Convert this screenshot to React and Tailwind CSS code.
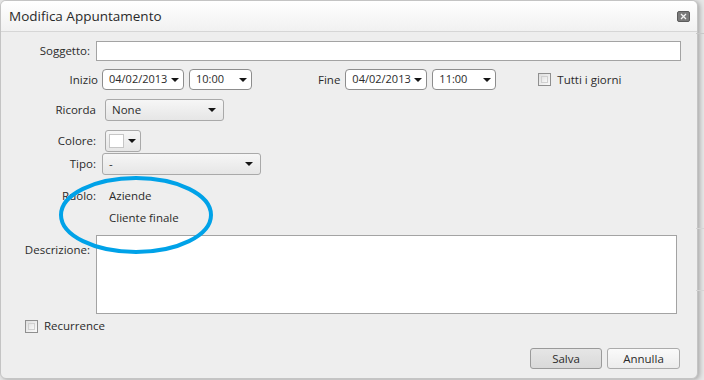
import React from 'react';

const font = { fontFamily: '"Open Sans", "Liberation Sans", sans-serif' };

const Caret = () => (
    <svg width="8" height="4" viewBox="0 0 8 4" className="shrink-0">
        <path d="M0 0h8L4 4z" fill="#151515" />
    </svg>
);

// white dropdown with rounded corners (date / time pickers)
const Picker = ({ value, className }) => (
    <div className={`flex h-[21px] items-center justify-between rounded-[4px] border border-[#8d8d8d] bg-white pl-[6px] pr-[4px] text-[11px] ${className}`}>
        <span>{value}</span>
        <Caret />
    </div>
);

// grey combo box (Ricorda / Tipo)
const Combo = ({ value, className }) => (
    <div className={`flex h-[22px] items-center justify-between rounded-[3px] border border-[#a9a9a9] bg-gradient-to-b from-[#f6f6f6] to-[#e6e6e6] pl-[6px] pr-[7px] ${className}`}>
        <span>{value}</span>
        <Caret />
    </div>
);

const Checkbox = () => (
    <div className="h-[13px] w-[13px] shrink-0 border border-[#8f8f8f] bg-gradient-to-br from-[#dedede] to-[#fafafa] p-[2px]">
        <div className="h-full w-full border border-[#d0d0d0] bg-gradient-to-br from-[#e4e4e4] to-[#f8f8f8]"></div>
    </div>
);

const Label = ({ children, className }) => (
    <div className={`shrink-0 text-right ${className}`}>{children}</div>
);

export default function App() {
    return (
        <div className="relative h-[380px] w-[704px] overflow-hidden bg-[#e6e6e6] text-[11.5px] text-[#2b2b2b]" style={font}>
            {/* page behind the dialog */}
            <div className="absolute right-0 top-[33px] h-px w-[8px] bg-[#c8c8c8]"></div>
            <div className="absolute right-0 top-[228px] h-px w-[8px] bg-[#d4d4d4]"></div>
            <div className="absolute right-0 top-[290px] h-px w-[8px] bg-[#d4d4d4]"></div>

            <div className="flex h-[379px] w-[698px] flex-col overflow-hidden rounded-[6px] border border-[#c4c4c4] bg-[#eeeeee] shadow-[2px_1px_4px_rgba(0,0,0,0.25)]">
                {/* title bar */}
                <div className="flex h-[31px] shrink-0 items-center justify-between border-b border-[#d6d6d6] bg-gradient-to-b from-white to-[#f1f1f1] pl-[8px] pr-[7px]">
                    <span className="text-[13.5px] text-[#2a2a2a]">Modifica Appuntamento</span>
                    <div className="flex h-[11px] w-[13px] items-center justify-center rounded-[2px] border border-[#5c5c5c] bg-[#7b7b7b]">
                        <svg width="7" height="7" viewBox="0 0 7 7">
                            <path d="M1 1l5 5M6 1L1 6" stroke="#f4f4f4" strokeWidth="1.3" />
                        </svg>
                    </div>
                </div>

                <div className="flex flex-col">
                    {/* Soggetto */}
                    <div className="mt-[9px] flex h-[20px] items-center">
                        <Label className="w-[89px]">Soggetto:</Label>
                        <div className="ml-[6px] h-[20px] w-[585px] border border-[#a3a3a3] bg-white"></div>
                    </div>

                    {/* Inizio / Fine */}
                    <div className="mt-[8px] flex h-[21px] items-center">
                        <Label className="w-[97px]">Inizio</Label>
                        <Picker value="04/02/2013" className="ml-[4px] w-[82px]" />
                        <Picker value="10:00" className="ml-[5px] w-[63px]" />
                        <span className="ml-[66px]">Fine</span>
                        <Picker value="04/02/2013" className="ml-[5px] w-[82px]" />
                        <Picker value="11:00" className="ml-[5px] w-[64px]" />
                        <div className="ml-[42px]"><Checkbox /></div>
                        <span className="ml-[6px]">Tutti i giorni</span>
                    </div>

                    {/* Ricorda */}
                    <div className="mt-[9px] flex h-[22px] items-center">
                        <Label className="w-[95px]">Ricorda</Label>
                        <Combo value="None" className="ml-[9px] w-[119px]" />
                    </div>

                    {/* Colore */}
                    <div className="mt-[9px] flex h-[22px] items-center">
                        <Label className="w-[95px]">Colore:</Label>
                        <div className="ml-[9px] flex h-[22px] w-[36px] items-center rounded-[3px] border border-[#a9a9a9] bg-gradient-to-b from-[#f6f6f6] to-[#e6e6e6] pl-[3px]">
                            <div className="h-[14px] w-[15px] border border-[#c6c6c6] bg-white"></div>
                            <div className="ml-[4px]"><Caret /></div>
                        </div>
                    </div>

                    {/* Tipo */}
                    <div className="mt-px flex h-[21px] items-center">
                        <Label className="w-[95px]">Tipo:</Label>
                        <Combo value="-" className="ml-[6px] h-[21px] w-[159px]" />
                    </div>

                    {/* Ruolo */}
                    <div className="mt-[11px] flex">
                        <Label className="w-[95px] leading-[22px]">Ruolo:</Label>
                        <div className="ml-[13px] flex flex-col leading-[22px]">
                            <span>Aziende</span>
                            <span>Cliente finale</span>
                        </div>
                    </div>

                    {/* Descrizione */}
                    <div className="mt-[6px] flex">
                        <Label className="w-[89px] pt-[6px]">Descrizione:</Label>
                        <div className="ml-[6px] h-[79px] w-[581px] border border-[#a3a3a3] bg-white"></div>
                    </div>

                    {/* Recurrence */}
                    <div className="mt-[5px] flex h-[14px] items-center pl-[24px]">
                        <Checkbox />
                        <span className="ml-[6px]">Recurrence</span>
                    </div>

                    {/* buttons */}
                    <div className="mt-[15px] flex justify-end gap-[5px] pr-[17px]">
                        <button className="h-[21px] w-[72px] rounded-[3px] border border-[#9a9a9a] bg-gradient-to-b from-[#e6e6e6] to-[#d9d9d9] text-[11.5px] text-[#2b2b2b]">Salva</button>
                        <button className="h-[21px] w-[73px] rounded-[3px] border border-[#ababab] bg-gradient-to-b from-[#fafafa] to-[#ececec] text-[11.5px] text-[#2b2b2b]">Annulla</button>
                    </div>
                </div>
            </div>

            {/* hand-drawn highlight around Ruolo values */}
            <svg className="pointer-events-none absolute left-[58px] top-[175px]" width="156" height="80" viewBox="0 0 156 80">
                <ellipse cx="78" cy="40" rx="75" ry="37" fill="none" stroke="#00a2e8" strokeWidth="4" />
            </svg>
        </div>
    );
}
